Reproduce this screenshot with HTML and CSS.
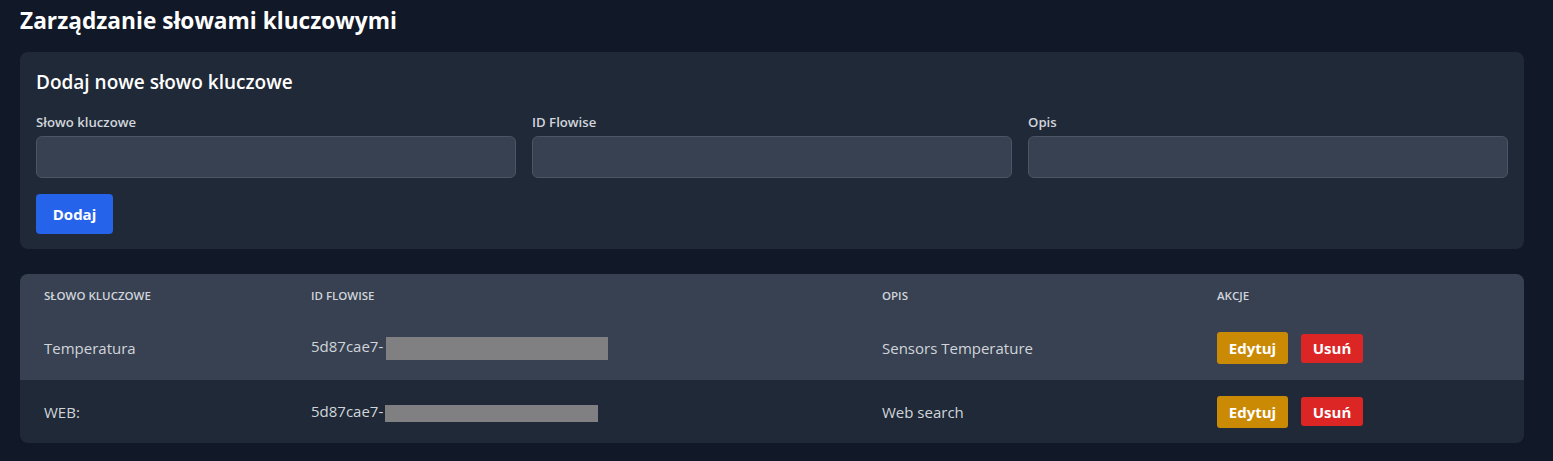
FILE: index.html
```html
<!DOCTYPE html>
<html lang="pl">
<head>
<meta charset="utf-8">
<title>Zarządzanie słowami kluczowymi</title>
<link rel="stylesheet" href="styles.css">
</head>
<body>
<div class="page">
  <h1 class="title">Zarządzanie słowami kluczowymi</h1>

  <section class="card form-card">
    <h2 class="card-title">Dodaj nowe słowo kluczowe</h2>
    <div class="fields">
      <div class="field">
        <label class="label">Słowo kluczowe</label>
        <input class="input" type="text">
      </div>
      <div class="field">
        <label class="label">ID Flowise</label>
        <input class="input" type="text">
      </div>
      <div class="field">
        <label class="label">Opis</label>
        <input class="input" type="text">
      </div>
    </div>
    <button class="btn-add">Dodaj</button>
  </section>

  <section class="card table-card">
    <table class="table">
      <colgroup>
        <col class="c1"><col class="c2"><col class="c3"><col class="c4">
      </colgroup>
      <thead>
        <tr>
          <th>Słowo kluczowe</th>
          <th>ID Flowise</th>
          <th>Opis</th>
          <th>Akcje</th>
        </tr>
      </thead>
      <tbody>
        <tr class="row-hover">
          <td>Temperatura</td>
          <td>5d87cae7-<span class="redact r1"></span></td>
          <td>Sensors Temperature</td>
          <td><button class="btn-edit">Edytuj</button><button class="btn-del">Usuń</button></td>
        </tr>
        <tr>
          <td>WEB:</td>
          <td>5d87cae7-<span class="redact r2"></span></td>
          <td>Web search</td>
          <td><button class="btn-edit">Edytuj</button><button class="btn-del">Usuń</button></td>
        </tr>
      </tbody>
    </table>
  </section>
</div>
</body>
</html>
```

FILE: styles.css
```css
* { box-sizing: border-box; }
html, body {
  margin: 0;
  background: #111827;
  font-family: "Open Sans", "Noto Sans", sans-serif;
  color: #d1d5db;
}
.page {
  padding: 4px 29px 20px 20px;
}
.title {
  margin: 0 0 14px;
  font-size: 22.7px;
  line-height: 34px;
  font-weight: 700;
  color: #ffffff;
}
.card {
  background: #1f2937;
  border-radius: 8px;
}
.form-card {
  padding: 16px 16px 15px;
  margin-bottom: 25px;
}
.card-title {
  margin: 0 0 16px;
  font-size: 19px;
  line-height: 28px;
  font-weight: 600;
  color: #ffffff;
}
.fields {
  display: grid;
  grid-template-columns: repeat(3, 1fr);
  gap: 16px;
}
.field {
  display: flex;
  flex-direction: column;
}
.label {
  font-size: 13.2px;
  line-height: 20px;
  font-weight: 600;
  color: #d1d5db;
  margin-bottom: 4px;
}
.input {
  height: 42px;
  background: #374151;
  border: 1px solid #4b5563;
  border-radius: 6px;
  color: #fff;
  font: inherit;
  padding: 0 12px;
}
.btn-add {
  margin-top: 16px;
  width: 77px;
  height: 40px;
  background: #2563eb;
  color: #fff;
  border: 0;
  border-radius: 4px;
  font-family: inherit;
  font-size: 15px;
  font-weight: 700;
  display: block;
}
.table-card {
  overflow: hidden;
}
.table {
  width: 100%;
  border-collapse: collapse;
}
.c1 { width: 267px; }
.c2 { width: 571px; }
.c3 { width: 335px; }
.c4 { width: auto; }
.table th {
  background: #374151;
  height: 42px;
  padding: 0 24px;
  text-align: left;
  font-size: 11.5px;
  font-weight: 600;
  text-transform: uppercase;
  color: #d1d5db;
}
.table td {
  padding: 0 24px;
  height: 64px;
  font-size: 15px;
  color: #d1d5db;
  white-space: nowrap;
}
.table tbody tr:last-child td { height: 63px; }
.row-hover td { background: #374151; }
.redact {
  display: inline-block;
  background: #808083;
  vertical-align: middle;
}
.r1 { width: 222px; height: 23px; margin-left: 3px; }
.r2 { width: 213px; height: 17px; margin-left: 2px; }
.btn-edit, .btn-del {
  border: 0;
  color: #fff;
  font-family: inherit;
  font-size: 15px;
  font-weight: 700;
  border-radius: 3px;
  vertical-align: middle;
  padding: 0;
}
.btn-edit {
  background: #ca8a04;
  width: 71px;
  height: 32px;
}
.btn-del {
  background: #dc2626;
  width: 62px;
  height: 29px;
  margin-left: 13px;
}
```
